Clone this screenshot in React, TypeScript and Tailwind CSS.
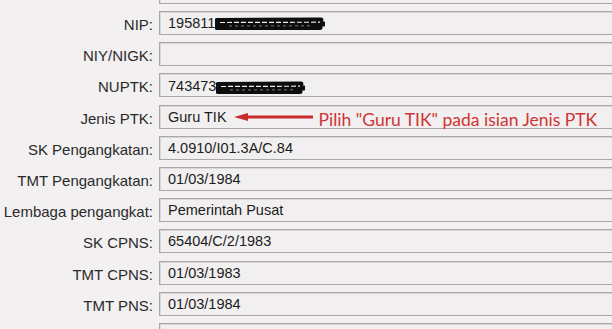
import React from "react";

const rows: { label: string; value: string; redact?: number }[] = [
  { label: "", value: "" },
  { label: "NIP:", value: "195811", redact: 1 },
  { label: "NIY/NIGK:", value: "" },
  { label: "NUPTK:", value: "743473", redact: 2 },
  { label: "Jenis PTK:", value: "Guru TIK" },
  { label: "SK Pengangkatan:", value: "4.0910/I01.3A/C.84" },
  { label: "TMT Pengangkatan:", value: "01/03/1984" },
  { label: "Lembaga pengangkat:", value: "Pemerintah Pusat" },
  { label: "SK CPNS:", value: "65404/C/2/1983" },
  { label: "TMT CPNS:", value: "01/03/1983" },
  { label: "TMT PNS:", value: "01/03/1984" },
  { label: "Sumber Gaji:", value: "" },
];

function Scribble({ w }: { w: number }) {
  return (
    <svg width={w} height="14" viewBox={`0 0 ${w} 14`} className="block">
      <path d={`M2 3.5 L${w - 4} 3`} stroke="#0d0d0d" strokeWidth="5" strokeLinecap="round" />
      <path d={`M1 7.5 L${w - 1} 7`} stroke="#0d0d0d" strokeWidth="5" strokeLinecap="round" />
      <path d={`M2 10.5 L${w - 5} 10.5`} stroke="#0d0d0d" strokeWidth="5" strokeLinecap="round" />
      <path d={`M5 5.5 L${w - 5} 5.2`} stroke="#f2f0f0" strokeWidth="1.2" strokeDasharray="5 2" />
      <path d={`M14 9 L${w - 12} 8.8`} stroke="#9a9898" strokeWidth="0.8" strokeDasharray="3 3" />
    </svg>
  );
}

function Arrow() {
  return (
    <svg width="80" height="10" viewBox="0 0 80 10" className="block shrink-0">
      <line x1="12" y1="5" x2="79" y2="5" stroke="#cc2b2b" strokeWidth="3" />
      <polygon points="0,5 14,1 14,9" fill="#cc2b2b" />
    </svg>
  );
}

export default function App() {
  return (
    <div className="w-[612px] h-[329px] overflow-hidden bg-[#f2f0f0]" style={{ fontFamily: '"Liberation Sans", Arial, sans-serif' }}>
      <div className="flex flex-col gap-[7.2px] mt-[-20.2px]">
        {rows.map((r, i) => (
          <div key={i} className="flex items-center gap-[6px]">
            <div
              className={`w-[153px] shrink-0 flex justify-end whitespace-nowrap text-[15px] leading-none pt-[3px] ${
                i === 11 ? "text-[#cfcccc]" : "text-[#2a2a2a]"
              }`}
            >
              {r.label}
            </div>
            <div className="h-[24px] w-[470px] shrink-0 border border-[#a9a6a6] bg-[#f1efef] shadow-[inset_1px_1px_0_#d9d6d6] flex items-center pl-[8px] pt-[2px] text-[14.5px] text-[#1c1c1c] whitespace-nowrap">
              <span>{r.value}</span>
              {r.redact === 1 && (
                <span className="mt-[-1px]">
                  <Scribble w={110} />
                </span>
              )}
              {r.redact === 2 && (
                <span className="mt-[3px]">
                  <Scribble w={89} />
                </span>
              )}
              {i === 4 && (
                <>
                  <span className="ml-[7px] mt-[-1px]">
                    <Arrow />
                  </span>
                  <span
                    className="ml-[5px] mt-[6px] text-[17.5px] text-[#d03434]"
                    style={{ fontFamily: 'Lato, "Open Sans", sans-serif' }}
                  >
                    Pilih "Guru TIK" pada isian Jenis PTK
                  </span>
                </>
              )}
            </div>
          </div>
        ))}
      </div>
    </div>
  );
}
